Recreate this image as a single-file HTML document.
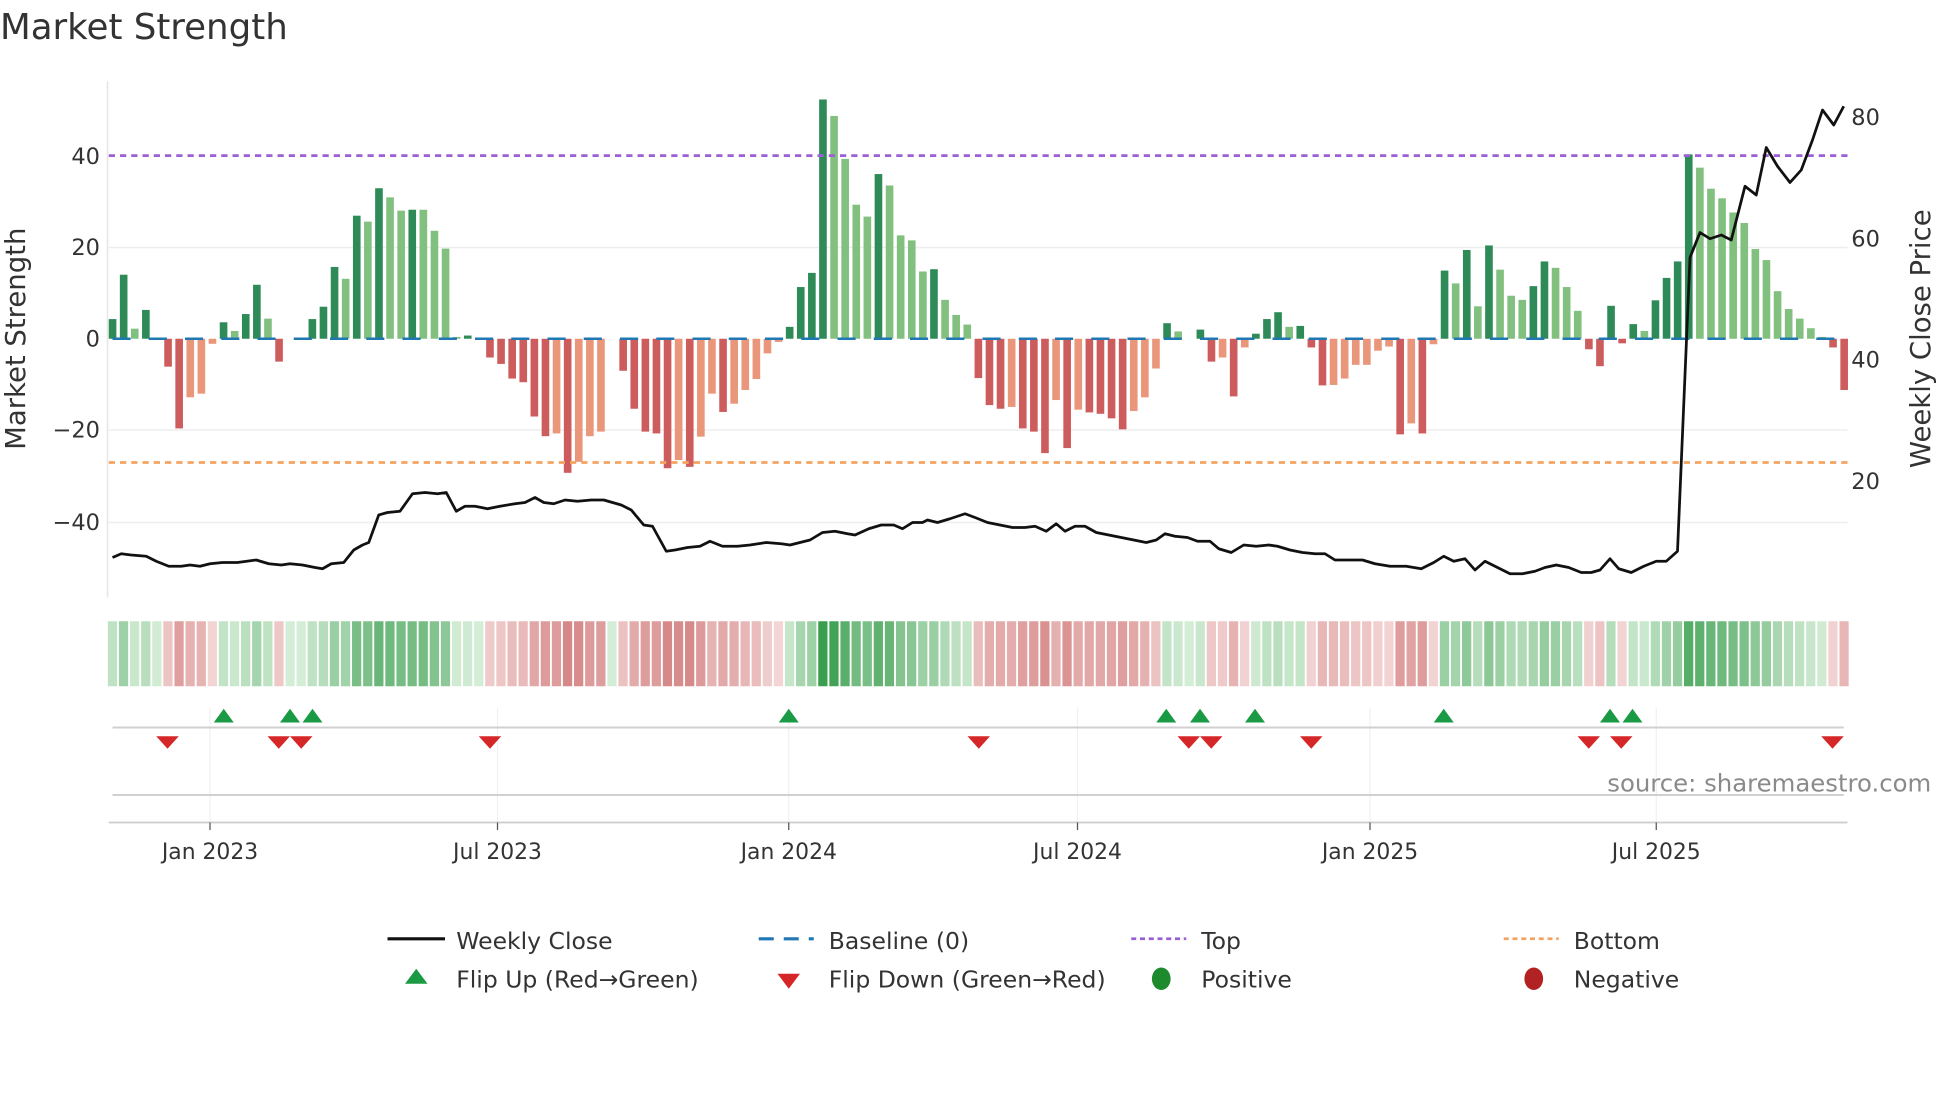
<!DOCTYPE html>
<html><head><meta charset="utf-8"><style>
html,body{margin:0;padding:0;background:#fff;width:1960px;height:1102px;overflow:hidden}
svg{display:block}
text{font-family:"DejaVu Sans","Liberation Sans",sans-serif;fill:#333}
</style></head><body>
<svg id="s" width="1960" height="1102" viewBox="0 0 1568 881.6" xmlns="http://www.w3.org/2000/svg">
<text x="0" y="31" font-size="28.5">Market Strength</text>
<g id="grid" stroke="#eeeeee" stroke-width="1.2">
<line x1="87" x2="1478" y1="198" y2="198"/><line x1="87" x2="1478" y1="344" y2="344"/><line x1="87" x2="1478" y1="418" y2="418"/>
</g>
<line x1="86" x2="86" y1="65" y2="478" stroke="#e6e6e6" stroke-width="1.2"/>
<g id="bars"></g>
<line x1="87" x2="1478" y1="271" y2="271" stroke="#1f77b4" stroke-width="2" stroke-dasharray="14.5,14.5" stroke-dashoffset="-3"/>
<line x1="87" x2="1478" y1="124.5" y2="124.5" stroke="#9b5fd6" stroke-width="2.2" stroke-dasharray="5,4"/>
<line x1="87" x2="1478" y1="370" y2="370" stroke="#f4a460" stroke-width="2.2" stroke-dasharray="5,4"/>
<polyline id="price" fill="none" stroke="#111" stroke-width="2.2" stroke-linejoin="round"/>
<g font-size="18" text-anchor="end">
<text x="80" y="131">40</text><text x="80" y="204">20</text><text x="80" y="277">0</text><text x="80" y="350">−20</text><text x="80" y="424">−40</text>
</g>
<g font-size="18">
<text x="1481" y="100">80</text><text x="1481" y="197">60</text><text x="1481" y="294">40</text><text x="1481" y="391">20</text>
</g>
<text transform="translate(20,271) rotate(-90)" font-size="22" text-anchor="middle">Market Strength</text>
<text transform="translate(1544,271) rotate(-90)" font-size="22" text-anchor="middle">Weekly Close Price</text>
<g id="heat"></g>
<g stroke="#eef0f4" stroke-width="1">
<line x1="168" x2="168" y1="566" y2="658"/><line x1="398" x2="398" y1="566" y2="658"/><line x1="631" x2="631" y1="566" y2="658"/><line x1="862" x2="862" y1="566" y2="658"/><line x1="1096" x2="1096" y1="566" y2="658"/><line x1="1325" x2="1325" y1="566" y2="658"/>
</g>
<line x1="90" x2="1475" y1="582" y2="582" stroke="#d0d0d0" stroke-width="1.6"/>
<line x1="90" x2="1475" y1="636" y2="636" stroke="#d0d0d0" stroke-width="1.6"/>
<line x1="87" x2="1478" y1="658" y2="658" stroke="#cccccc" stroke-width="1.4"/>
<g stroke="#555" stroke-width="1">
<line x1="168" x2="168" y1="658" y2="664"/><line x1="398" x2="398" y1="658" y2="664"/><line x1="631" x2="631" y1="658" y2="664"/><line x1="862" x2="862" y1="658" y2="664"/><line x1="1096" x2="1096" y1="658" y2="664"/><line x1="1325" x2="1325" y1="658" y2="664"/>
</g>
<g id="marks"></g>
<text x="1545" y="633" font-size="19.5" text-anchor="end" style="fill:#8a8a8a">source: sharemaestro.com</text>
<g font-size="17.5" text-anchor="middle">
<text x="168" y="687">Jan 2023</text><text x="398" y="687">Jul 2023</text><text x="631" y="687">Jan 2024</text><text x="862" y="687">Jul 2024</text><text x="1096" y="687">Jan 2025</text><text x="1325" y="687">Jul 2025</text>
</g>
<g font-size="18.8">
<line x1="310" x2="356" y1="751" y2="751" stroke="#111" stroke-width="2.5"/>
<text x="365" y="759">Weekly Close</text>
<line x1="607" x2="651" y1="751" y2="751" stroke="#1f77b4" stroke-width="2.5" stroke-dasharray="12,8"/>
<text x="663" y="759">Baseline (0)</text>
<line x1="905" x2="949" y1="751" y2="751" stroke="#9b5fd6" stroke-width="2.2" stroke-dasharray="4,3"/>
<text x="961" y="759">Top</text>
<line x1="1203" x2="1247" y1="751" y2="751" stroke="#f4a460" stroke-width="2.2" stroke-dasharray="4,3"/>
<text x="1259" y="759">Bottom</text>
<polygon points="324,787 333,775 342,787" fill="#1a9a44"/>
<text x="365" y="790">Flip Up (Red→Green)</text>
<polygon points="622,779 640,779 631,791" fill="#d62728"/>
<text x="663" y="790">Flip Down (Green→Red)</text>
<ellipse cx="929" cy="783" rx="7.5" ry="9" fill="#1e8a2e"/>
<text x="961" y="790">Positive</text>
<ellipse cx="1227" cy="783" rx="7.5" ry="9" fill="#b22222"/>
<text x="1259" y="790">Negative</text>
</g>
</svg>
<script>
(function(){
var NS="http://www.w3.org/2000/svg";
var V=[[4.3,1],[14,1],[2.2,0],[6.3,1],[0.2,1],[-6.1,1],[-19.6,1],[-12.8,0],[-12,0],[-1.1,0],
[3.6,1],[1.7,0],[5.4,1],[11.8,1],[4.4,0],[-5,1],[0,1],[0,1],[4.3,1],[7,1],
[15.7,1],[13.1,0],[26.9,1],[25.6,0],[32.9,1],[30.9,0],[28,0],[28.2,1],[28.2,0],[23.6,0],
[19.7,0],[0.4,0],[0.7,1],[0,1],[-4.1,1],[-5.5,1],[-8.7,1],[-9.5,1],[-17,1],[-21.3,1],
[-20.7,0],[-29.3,1],[-26.9,0],[-21.3,0],[-20.3,0],[0,1],[-7,1],[-15.3,1],[-20.3,1],[-20.7,1],
[-28.3,1],[-26.5,0],[-28,1],[-21.4,0],[-12,0],[-16,1],[-14.2,0],[-11.2,0],[-8.8,0],[-3.2,0],
[-0.7,0],[2.6,1],[11.3,1],[14.4,1],[52.3,1],[48.7,0],[39.3,0],[29.3,0],[26.7,0],[36,1],
[33.5,0],[22.6,0],[21.5,0],[14.7,0],[15.2,1],[8.5,0],[5.2,0],[3.1,0],[-8.6,1],[-14.5,1],
[-15.3,1],[-14.9,0],[-19.6,1],[-20.3,1],[-25,1],[-13.4,0],[-23.9,1],[-15.5,0],[-16.1,1],[-16.4,1],
[-17.4,1],[-19.8,1],[-15.8,0],[-12.8,0],[-6.5,0],[3.4,1],[1.6,0],[0,0],[2,1],[-5,1],
[-4.1,0],[-12.6,1],[-1.9,0],[1.1,1],[4.3,1],[5.8,1],[2.6,0],[2.8,1],[-1.9,1],[-10.2,1],
[-10.1,0],[-8.7,0],[-5.7,0],[-5.7,0],[-2.6,0],[-1.7,0],[-20.9,1],[-18.5,0],[-20.7,1],[-1.2,0],
[14.9,1],[12.1,0],[19.4,1],[7.1,0],[20.4,1],[15.1,0],[9.4,0],[8.5,0],[11.5,1],[16.9,1],
[15.5,0],[11.3,0],[6.1,0],[-2.3,1],[-6,1],[7.2,1],[-1,1],[3.2,1],[1.7,0],[8.4,1],
[13.3,1],[16.9,1],[40.3,1],[37.4,0],[32.8,0],[30.7,0],[27.6,0],[25.3,0],[19.6,0],[17.2,0],
[10.4,0],[6.5,0],[4.4,0],[2.3,0],[0.4,0],[-1.9,1],[-11.2,1]];
var bars=document.getElementById('bars'),heat=document.getElementById('heat');
function lerp(a,b,t){return Math.round(a+(b-a)*t);}
function col(c1,c2,t){return 'rgb('+lerp(c1[0],c2[0],t)+','+lerp(c1[1],c2[1],t)+','+lerp(c1[2],c2[2],t)+')';}
for(var i=0;i<V.length;i++){
 var v=V[i][0],d=V[i][1],cx=90+i*8.88;
 if(Math.abs(v)>0.05){
  var r=document.createElementNS(NS,'rect');
  var h=Math.abs(v)*3.66;
  r.setAttribute('x',(cx-3).toFixed(2));r.setAttribute('width','6.1');
  r.setAttribute('y',v>0?(271-h).toFixed(2):'271');r.setAttribute('height',h.toFixed(2));
  r.setAttribute('fill',v>0?(d?'#2e8b57':'#82c07f'):(d?'#cd5c5c':'#e9967a'));
  bars.appendChild(r);
 }
 var c=document.createElementNS(NS,'rect');
 c.setAttribute('x',(cx-4.44+0.7).toFixed(2));c.setAttribute('width','7.4');
 c.setAttribute('y','497');c.setAttribute('height','52');
 var t;
 if(v>=0){t=Math.min(1,Math.pow(v/52,0.8));c.setAttribute('fill',col([212,237,214],[58,158,79],t));}
 else{t=Math.min(1,Math.pow(-v/29,0.9));c.setAttribute('fill',col([244,216,216],[214,135,135],t));}
 heat.appendChild(c);
}
var P=[[90,446],[97,443],[105,444],[117,445],[125,449],[135,453],[145,453],[152,452],[160,453],[168,451],[178,450],[190,450],[205,448],[215,451],[225,452],[232,451],[242,452],[252,454],[258,455],[265,451],[275,450],[283,440],[290,436],[295,434],[303,412],[310,410],[320,409],[330,395],[340,394],[350,395],[357,394],[365,409],[372,405],[380,405],[390,407],[400,405],[412,403],[420,402],[428,398],[435,402],[443,403],[452,400],[462,401],[473,400],[483,400],[490,402],[497,404],[505,408],[515,420],[522,421],[533,441],[540,440],[550,438],[560,437],[568,433],[578,437],[590,437],[600,436],[613,434],[625,435],[632,436],[640,434],[648,432],[658,426],[668,425],[678,427],[684,428],[695,423],[705,420],[715,420],[722,423],[730,418],[738,418],[742,416],[750,418],[760,415],[772,411],[780,414],[790,418],[800,420],[810,422],[820,422],[828,421],[837,425],[845,419],[852,425],[860,421],[868,421],[877,426],[887,428],[897,430],[907,432],[917,434],[925,432],[932,427],[940,429],[950,430],[958,433],[968,433],[975,439],[985,442],[995,436],[1005,437],[1015,436],[1022,437],[1032,440],[1042,442],[1052,443],[1060,443],[1068,448],[1080,448],[1090,448],[1100,451],[1112,453],[1125,453],[1137,455],[1147,450],[1155,445],[1163,449],[1172,447],[1180,456],[1188,449],[1196,453],[1208,459],[1218,459],[1228,457],[1236,454],[1245,452],[1255,454],[1265,458],[1273,458],[1280,456],[1288,447],[1295,455],[1305,458],[1315,453],[1325,449],[1333,449],[1342,441],[1352,206],[1360,186],[1368,191],[1377,188],[1385,192],[1396,149],[1405,156],[1413,118],[1422,133],[1432,146],[1441,136],[1450,112],[1458,88],[1467,100],[1475,85]];
document.getElementById('price').setAttribute('points',P.map(function(p){return p[0]+','+p[1];}).join(' '));
var m=document.getElementById('marks');
[179,232,250,631,933,960,1004,1155,1288,1306].forEach(function(x){
 var p=document.createElementNS(NS,'polygon');p.setAttribute('points',(x-8)+',578 '+x+',567 '+(x+8)+',578');p.setAttribute('fill','#1a9a44');m.appendChild(p);});
[134,223,241,392,783,951,969,1049,1271,1297,1466].forEach(function(x){
 var p=document.createElementNS(NS,'polygon');p.setAttribute('points',(x-9)+',589 '+(x+9)+',589 '+x+',599');p.setAttribute('fill','#d62728');m.appendChild(p);});
})();
</script>
</body></html>
